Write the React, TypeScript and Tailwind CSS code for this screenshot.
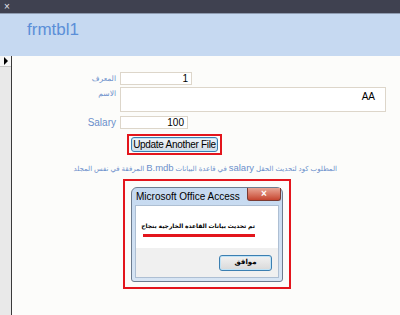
import React from 'react';

const font = { fontFamily: '"Liberation Sans", "DejaVu Sans", Arial, sans-serif' };

const Field = ({ label, value, width, height, labelTop, rtlLabel }: {
    label: string;
    value: string;
    width: string;
    height: string;
    labelTop?: boolean;
    rtlLabel?: boolean;
}) => (
    <div className={`flex flex-row ${labelTop ? 'items-start' : 'items-center'}`}>
        <div
            dir={rtlLabel ? 'rtl' : 'ltr'}
            className={`w-[104px] whitespace-nowrap text-right text-[#6b8fcb] ${rtlLabel ? 'text-[7.5px]' : 'text-[10px]'} leading-[12px] ${labelTop ? 'pt-[1px]' : ''}`}
        >
            {label}
        </div>
        <div
            className={`ml-[4px] ${width} ${height} border border-[#ddd6ca] bg-white text-right text-[10px] leading-[11px] text-black ${labelTop ? 'pt-[3px] pr-[10px]' : 'pr-[3px]'}`}
        >
            {value}
        </div>
    </div>
);

export default function App() {
    return (
        <div style={font} className="flex h-[315px] w-[400px] flex-col overflow-hidden bg-[#fcfcfa]">
            {/* top strip */}
            <div className="flex h-[13px] items-center bg-[#3f4150] pl-[4px] text-[10px] leading-none text-[#e8e8f0]">
                ×
            </div>
            <div className="h-[1px] bg-[#8e9bb0]" />
            {/* form header */}
            <div className="flex h-[42px] items-start bg-[#c6d9f1] pl-[27px] pt-[3px] text-[17px] text-[#5b8fd8]">
                frmtbl1
            </div>
            {/* body */}
            <div className="flex flex-1 flex-row">
                <div className="flex w-[12px] flex-col border-r border-[#3a3a3a] bg-[#e9e9e9]">
                    <div className="flex h-[11px] items-center justify-center border-b border-[#c8c8c8] bg-[#f7f7f7]">
                        <div className="h-0 w-0 border-y-[4px] border-l-[4px] border-y-transparent border-l-black" />
                    </div>
                </div>
                <div className="flex flex-1 flex-col pt-[16px]">
                    <Field label="المعرف" value="1" width="w-[72px]" height="h-[13px]" rtlLabel />
                    <div className="mt-[2px]">
                        <Field label="الاسم" value="AA" width="w-[266px]" height="h-[25px]" labelTop rtlLabel />
                    </div>
                    <div className="mt-[4px]">
                        <Field label="Salary" value="100" width="w-[68px]" height="h-[13px]" />
                    </div>
                    {/* button with red highlight */}
                    <div className="ml-[115px] mt-[5px] flex h-[21px] w-[95px] items-center justify-center border-2 border-[#e3151c]">
                        <div className="flex h-[15px] w-[87px] items-center justify-center rounded-[3px] border border-[#3c7fb1] bg-gradient-to-b from-[#f1f5f9] to-[#d3dce6] text-[10px] tracking-[-0.3px] text-black shadow-[inset_0_0_0_1px_#c4e5f6]">
                            Update Another File
                        </div>
                    </div>
                    {/* description */}
                    <div dir="rtl" className="mt-[7px] w-[325px] whitespace-nowrap text-[7px] leading-[12px] text-[#6b8fcb]">
                        المطلوب كود لتحديث الحقل <span className="text-[9.5px]">salary</span> في قاعدة البيانات <span className="text-[9.5px]">B.mdb</span> المرفقة في نفس المجلد
                    </div>
                    {/* message box with red highlight */}
                    <div className="ml-[111px] mt-[4px] w-[168px] border-2 border-[#e3151c] px-[6px] pb-[5px] pt-[6px]">
                        <div className="flex h-[95px] flex-col rounded-t-[6px] rounded-b-[3px] border border-[#6d7c90] bg-gradient-to-b from-[#c5d9f0] to-[#d7e5f4]">
                            <div className="flex h-[17px] flex-row items-start justify-between">
                                <div className="pl-[4px] pt-[3px] text-[10px] leading-[12px] text-black">
                                    Microsoft Office Access
                                </div>
                                <div className="mr-[1px] flex h-[13px] w-[34px] items-center justify-center rounded-b-[3px] border border-t-0 border-[#7a3b33] bg-gradient-to-b from-[#e8a494] to-[#c5442f] text-[10px] font-bold leading-none text-white">
                                    ×
                                </div>
                            </div>
                            <div className="mx-[3px] mb-[3px] flex flex-1 flex-col border border-[#aebfd3]">
                                <div className="flex h-[42px] flex-col items-end bg-white pr-[23px] pt-[15px]">
                                    <div dir="rtl" className="whitespace-nowrap text-[6px] font-bold leading-[11px] text-black">
                                        تم تحديث بيانات القاعدة الخارجية بنجاح
                                    </div>
                                    <div className="mt-[2px] h-[3px] w-[112px] bg-[#e3151c]" />
                                </div>
                                <div className="flex flex-1 items-center justify-end bg-[#f0f0f0] pr-[6px]">
                                    <div className="flex h-[16px] w-[53px] items-center justify-center rounded-[3px] border border-[#3c7fb1] bg-gradient-to-b from-[#f2f2f2] to-[#d9d9d9] text-[7px] font-bold text-black shadow-[inset_0_0_0_1px_#bfe3f7]">
                                        موافق
                                    </div>
                                </div>
                            </div>
                        </div>
                    </div>
                </div>
            </div>
        </div>
    );
}
